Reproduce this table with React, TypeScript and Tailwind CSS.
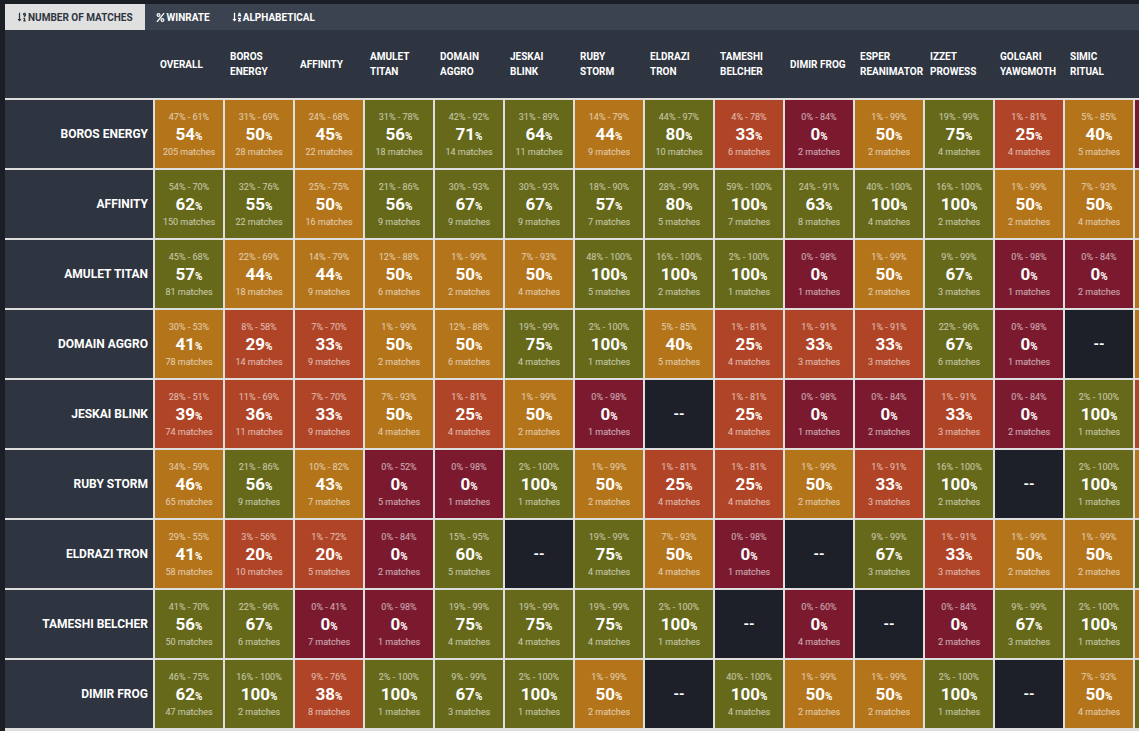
import { FaSortNumericDownAlt, FaSortAlphaDown, FaPercent } from 'react-icons/fa';

type Cell = [number, number, number, number] | null; // low, high, winrate, matches

const COLUMNS = [
  'OVERALL',
  'BOROS\nENERGY',
  'AFFINITY',
  'AMULET\nTITAN',
  'DOMAIN\nAGGRO',
  'JESKAI\nBLINK',
  'RUBY\nSTORM',
  'ELDRAZI\nTRON',
  'TAMESHI\nBELCHER',
  'DIMIR FROG',
  'ESPER\nREANIMATOR',
  'IZZET\nPROWESS',
  'GOLGARI\nYAWGMOTH',
  'SIMIC\nRITUAL',
];

// next: winrate of the column that is cut off at the right edge
const ROWS: { name: string; cells: Cell[]; next: number }[] = [
  {
    name: 'BOROS ENERGY',
    next: 0,
    cells: [
      [47, 61, 54, 205], [31, 69, 50, 28], [24, 68, 45, 22], [31, 78, 56, 18], [42, 92, 71, 14],
      [31, 89, 64, 11], [14, 79, 44, 9], [44, 97, 80, 10], [4, 78, 33, 6], [0, 84, 0, 2],
      [1, 99, 50, 2], [19, 99, 75, 4], [1, 81, 25, 4], [5, 85, 40, 5],
    ],
  },
  {
    name: 'AFFINITY',
    next: 50,
    cells: [
      [54, 70, 62, 150], [32, 76, 55, 22], [25, 75, 50, 16], [21, 86, 56, 9], [30, 93, 67, 9],
      [30, 93, 67, 9], [18, 90, 57, 7], [28, 99, 80, 5], [59, 100, 100, 7], [24, 91, 63, 8],
      [40, 100, 100, 4], [16, 100, 100, 2], [1, 99, 50, 2], [7, 93, 50, 4],
    ],
  },
  {
    name: 'AMULET TITAN',
    next: 50,
    cells: [
      [45, 68, 57, 81], [22, 69, 44, 18], [14, 79, 44, 9], [12, 88, 50, 6], [1, 99, 50, 2],
      [7, 93, 50, 4], [48, 100, 100, 5], [16, 100, 100, 2], [2, 100, 100, 1], [0, 98, 0, 1],
      [1, 99, 50, 2], [9, 99, 67, 3], [0, 98, 0, 1], [0, 84, 0, 2],
    ],
  },
  {
    name: 'DOMAIN AGGRO',
    next: 50,
    cells: [
      [30, 53, 41, 78], [8, 58, 29, 14], [7, 70, 33, 9], [1, 99, 50, 2], [12, 88, 50, 6],
      [19, 99, 75, 4], [2, 100, 100, 1], [5, 85, 40, 5], [1, 81, 25, 4], [1, 91, 33, 3],
      [1, 91, 33, 3], [22, 96, 67, 6], [0, 98, 0, 1], null,
    ],
  },
  {
    name: 'JESKAI BLINK',
    next: 33,
    cells: [
      [28, 51, 39, 74], [11, 69, 36, 11], [7, 70, 33, 9], [7, 93, 50, 4], [1, 81, 25, 4],
      [1, 99, 50, 2], [0, 98, 0, 1], null, [1, 81, 25, 4], [0, 98, 0, 1],
      [0, 84, 0, 2], [1, 91, 33, 3], [0, 84, 0, 2], [2, 100, 100, 1],
    ],
  },
  {
    name: 'RUBY STORM',
    next: 50,
    cells: [
      [34, 59, 46, 65], [21, 86, 56, 9], [10, 82, 43, 7], [0, 52, 0, 5], [0, 98, 0, 1],
      [2, 100, 100, 1], [1, 99, 50, 2], [1, 81, 25, 4], [1, 81, 25, 4], [1, 99, 50, 2],
      [1, 91, 33, 3], [16, 100, 100, 2], null, [2, 100, 100, 1],
    ],
  },
  {
    name: 'ELDRAZI TRON',
    next: 67,
    cells: [
      [29, 55, 41, 58], [3, 56, 20, 10], [1, 72, 20, 5], [0, 84, 0, 2], [15, 95, 60, 5],
      null, [19, 99, 75, 4], [7, 93, 50, 4], [0, 98, 0, 1], null,
      [9, 99, 67, 3], [1, 91, 33, 3], [1, 99, 50, 2], [1, 99, 50, 2],
    ],
  },
  {
    name: 'TAMESHI BELCHER',
    next: 50,
    cells: [
      [41, 70, 56, 50], [22, 96, 67, 6], [0, 41, 0, 7], [0, 98, 0, 1], [19, 99, 75, 4],
      [19, 99, 75, 4], [19, 99, 75, 4], [2, 100, 100, 1], null, [0, 60, 0, 4],
      null, [0, 84, 0, 2], [9, 99, 67, 3], [2, 100, 100, 1],
    ],
  },
  {
    name: 'DIMIR FROG',
    next: 67,
    cells: [
      [46, 75, 62, 47], [16, 100, 100, 2], [9, 76, 38, 8], [2, 100, 100, 1], [9, 99, 67, 3],
      [2, 100, 100, 1], [1, 99, 50, 2], null, [40, 100, 100, 4], [1, 99, 50, 2],
      [1, 99, 50, 2], [2, 100, 100, 1], null, [7, 93, 50, 4],
    ],
  },
];

function cellColor(wr: number) {
  if (wr < 20) return 'bg-[#7b1a2f]';
  if (wr < 40) return 'bg-[#b04426]';
  if (wr < 55) return 'bg-[#b4741a]';
  return 'bg-[#666919]';
}

function MatchCell({ cell }: { cell: Cell }) {
  if (!cell) {
    return (
      <div className="ml-[2px] flex h-[68px] w-[68px] shrink-0 items-center justify-center bg-[#1d2029] text-[14px] font-bold text-white">
        --
      </div>
    );
  }
  const [lo, hi, wr, n] = cell;
  return (
    <div className={`ml-[2px] flex h-[68px] w-[68px] shrink-0 flex-col items-center pt-[11px] text-white ${cellColor(wr)}`}>
      <div className="text-[9px] leading-[12px] text-white/65">
        {lo}% - {hi}%
      </div>
      <div className="flex h-[22px] items-baseline justify-center leading-[22px]">
        <span className="text-[17px] font-bold">{wr}</span>
        <span className="text-[10px] font-bold">%</span>
      </div>
      <div className="text-[9px] leading-[14px] text-white/65">{n} matches</div>
    </div>
  );
}

export default function App() {
  return (
    <div
      className="h-screen w-full overflow-hidden bg-[#1b1e24] pl-[5px] pt-[4px]"
      style={{ fontFamily: 'Roboto, "Liberation Sans", sans-serif' }}
    >
      <div className="flex h-[26px] items-stretch bg-[#3c4350] text-[10px] font-bold">
        <button className="flex items-center gap-[1px] bg-[#e0e0e0] px-[12px] uppercase text-[#2e3440]">
          <FaSortNumericDownAlt className="text-[10px]" />
          Number of Matches
        </button>
        <button className="flex items-center gap-[2px] px-[11px] uppercase text-white">
          <FaPercent className="text-[9px]" />
          Winrate
        </button>
        <button className="flex items-center gap-[1px] px-[11px] uppercase text-white">
          <FaSortAlphaDown className="text-[10px]" />
          Alphabetical
        </button>
      </div>

      <div className="h-full bg-[#dedede]">
        <div className="flex h-[68px] w-max bg-[#2e3440] text-[10px] font-bold leading-[15px] text-white">
          <div className="w-[148px] shrink-0" />
          {COLUMNS.map((c) => (
            <div key={c} className="ml-[2px] flex w-[68px] shrink-0 items-center whitespace-pre-line pl-[5px]">
              {c}
            </div>
          ))}
          <div className="ml-[2px] w-[68px] shrink-0" />
        </div>

        {ROWS.map((row) => (
          <div key={row.name} className="mt-[2px] flex w-max">
            <div className="flex h-[68px] w-[148px] shrink-0 items-center justify-end bg-[#2e3440] pr-[5px] text-[12px] font-bold text-white">
              {row.name}
            </div>
            {row.cells.map((cell, i) => (
              <MatchCell key={i} cell={cell} />
            ))}
            <div className={`ml-[2px] h-[68px] w-[68px] shrink-0 ${cellColor(row.next)}`} />
          </div>
        ))}
      </div>
    </div>
  );
}
